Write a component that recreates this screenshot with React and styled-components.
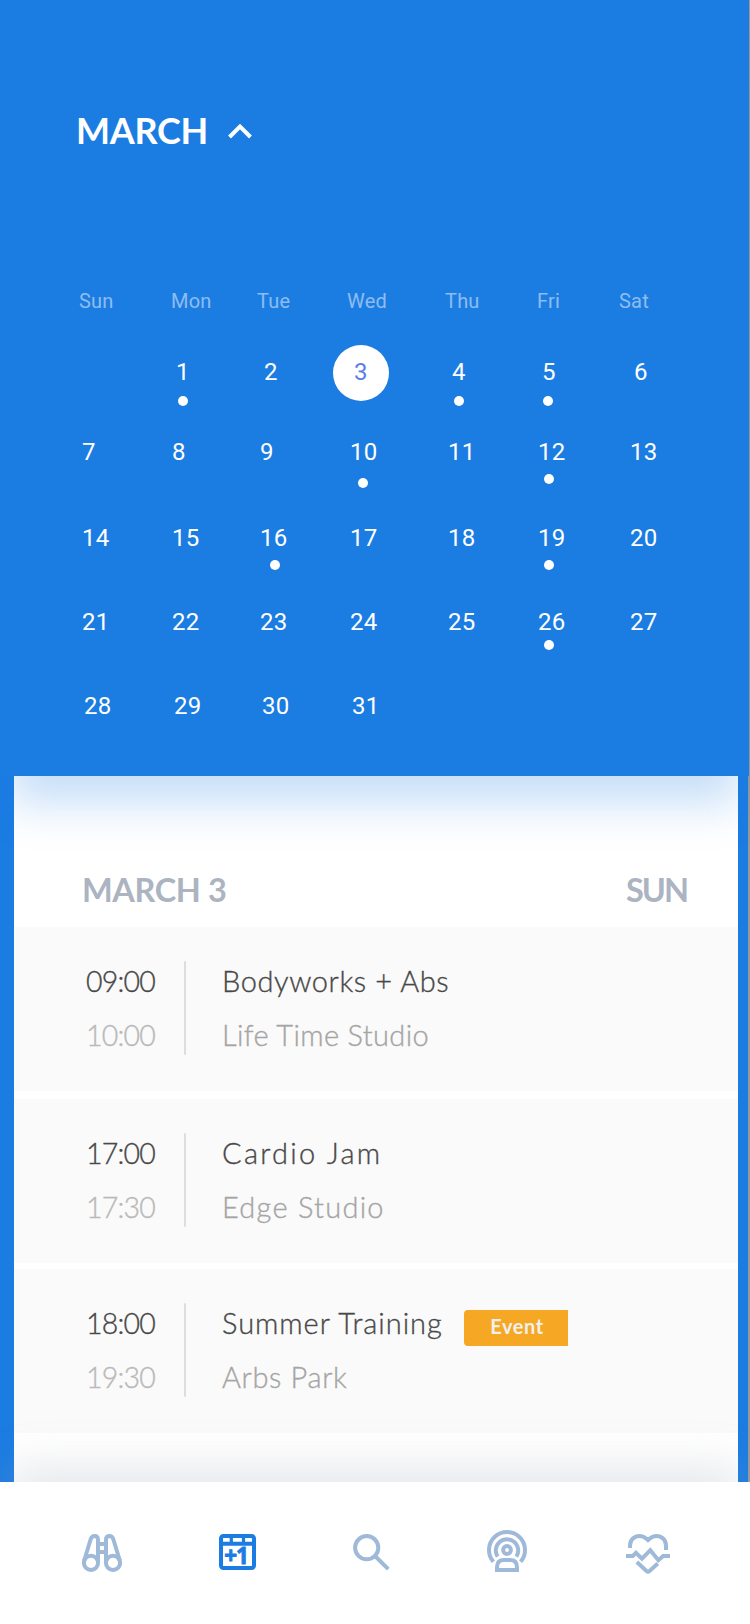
import React from "react";
import styled, { createGlobalStyle } from "styled-components";

const BLUE = "#1b7ce2";
const MUTED = "#9fb9d9";

const GlobalStyle = createGlobalStyle`
  * { box-sizing: border-box; }
  body { margin: 0; background: #999; }
`;

const Screen = styled.div`
  width: 750px;
  height: 1624px;
  display: flex;
  flex-direction: column;
  overflow: hidden;
  background: #999;
  font-family: Lato, "Liberation Sans", sans-serif;
  white-space: nowrap;
`;

const Calendar = styled.section`
  position: relative;
  z-index: 1;
  flex: none;
  width: 749px;
  height: 776px;
  padding-top: 108px;
  background: ${BLUE};
  box-shadow: 0 36px 42px -9px rgba(27, 124, 226, 0.25);
`;

const MonthTitle = styled.header`
  display: flex;
  align-items: center;
  gap: 21px;
  height: 46px;
  padding-left: 76px;
  color: #fff;
`;

const Month = styled.h1`
  margin: 0 0 2px;
  width: 131px;
  font-size: 36px;
  line-height: 44px;
  font-weight: 700;
  letter-spacing: ${(p) => p.$spacing}px;
`;

const Weekdays = styled.div`
  display: grid;
  grid-template-columns: 92px 86px 90px 98px 92px 82px auto;
  margin-top: 135px;
  padding-left: 79px;
  color: rgba(255, 255, 255, 0.5);
  font: 400 20px/24px Roboto, sans-serif;
  letter-spacing: 0.2px;
`;

const Weeks = styled.div`
  display: grid;
  grid-template-rows: 80px 86px 84px 84px 28px;
  margin-top: 45px;
  padding-left: 82px;
`;

const Week = styled.div`
  display: grid;
  grid-template-columns: 90px 88px 90px 98px 90px 92px auto;
  padding-left: ${(p) => p.$shift}px;
`;

const Day = styled.div`
  position: relative;
  color: ${(p) => (p.$selected ? "#5b7fe8" : "#fff")};
  font: 400 24px/28px Roboto, sans-serif;
  letter-spacing: 0.2px;
`;

const DayNumber = styled.span`
  position: relative;
`;

const SelectedDisc = styled.i`
  position: absolute;
  left: -21px;
  top: -13px;
  width: 56px;
  height: 56px;
  border-radius: 50%;
  background: #fff;
`;

const EventDot = styled.i`
  position: absolute;
  left: ${(p) => p.$x}px;
  top: ${(p) => p.$y}px;
  width: 10px;
  height: 10px;
  border-radius: 50%;
  background: #fff;
`;

const Backdrop = styled.main`
  flex: none;
  width: 748px;
  height: 706px;
  padding: 0 10px 0 14px;
  background: ${BLUE};
`;

const Agenda = styled.div`
  height: 706px;
  background: #fff;
`;

const AgendaHead = styled.div`
  display: flex;
  justify-content: space-between;
  align-items: flex-end;
  height: 151px;
  padding: 0 49px 17px 68px;
  color: #abb4c0;
`;

const AgendaLabel = styled.h2`
  margin: 0 ${(p) => -p.$spacing}px 0 0;
  font-size: 32.5px;
  line-height: 40px;
  font-weight: 700;
  letter-spacing: ${(p) => p.$spacing}px;
`;

const Entry = styled.article`
  display: grid;
  grid-template-columns: 142px 2px 1fr;
  height: 164px;
  margin-bottom: ${(p) => p.$gap}px;
  padding: 34px 0 36px 28px;
  background: #fafafa;
`;

const Times = styled.div`
  padding-right: 29px;
  text-align: right;
`;

const Divider = styled.div`
  background: #ddd;
  border-radius: 1px;
`;

const Details = styled.div`
  padding-left: 36px;
`;

const Line = styled.div`
  display: flex;
  align-items: center;
  justify-content: ${(p) => (p.$end ? "flex-end" : "flex-start")};
  height: 34px;
  margin: ${(p) => (p.$secondary ? "20px" : "3px")} 0 0;
  color: ${(p) => p.$color};
  font-size: ${(p) => (p.$end ? 28.5 : 29)}px;
  line-height: 34px;
  font-weight: 300;
  letter-spacing: ${(p) => p.$spacing}px;
  -webkit-text-stroke: 0.35px currentColor;
`;

const Name = styled.span`
  width: ${(p) => (p.$fixed ? `${p.$fixed}px` : "auto")};
`;

const Badge = styled.span`
  width: 104px;
  height: 36px;
  margin-top: 10px;
  padding-left: 2px;
  border-radius: 4px 0 0 4px;
  background: #f6a724;
  color: #f1f0ec;
  font-size: 20px;
  line-height: 33px;
  font-weight: 700;
  letter-spacing: 0.6px;
  text-align: center;
  -webkit-text-stroke: 0;
`;

const TabBar = styled.nav`
  position: relative;
  z-index: 2;
  flex: none;
  display: flex;
  justify-content: space-between;
  align-items: flex-start;
  height: 142px;
  padding: 48px 80px 0 82px;
  background: #fff;
  box-shadow: 0 -26px 44px -10px rgba(158, 165, 182, 0.26);
`;

const TabIcon = styled.svg`
  display: block;
  margin-top: ${(p) => p.$top}px;
  margin-left: ${(p) => p.$nudge || 0}px;
  margin-right: ${(p) => -(p.$nudge || 0)}px;
  fill: none;
  stroke: ${(p) => (p.$active ? BLUE : MUTED)};
  stroke-width: 4;
`;

const IconText = styled.text`
  fill: ${BLUE};
  stroke: ${BLUE};
  stroke-width: 0.8;
  font: 700 22.5px "Open Sans", sans-serif;
  letter-spacing: -1px;
`;

const weekdays = ["Sun", "Mon", "Tue", "Wed", "Thu", "Fri", "Sat"];

const weeks = [
  { shift: 4, days: [null, 1, 2, 3, 4, 5, 6] },
  { shift: 0, days: [7, 8, 9, 10, 11, 12, 13] },
  { shift: 0, days: [14, 15, 16, 17, 18, 19, 20] },
  { shift: 0, days: [21, 22, 23, 24, 25, 26, 27] },
  { shift: 2, days: [28, 29, 30, 31] },
];

const dots = {
  1: [2, 38],
  4: [2, 38],
  5: [1, 38],
  10: [8, 40],
  12: [6, 36],
  16: [10, 36],
  19: [6, 36],
  26: [6, 32],
};

const entries = [
  { start: "09:00", end: "10:00", name: "Bodyworks + Abs", place: "Life Time Studio", gap: 8, ns: 0.6, ps: 0.35 },
  { start: "17:00", end: "17:30", name: "Cardio Jam", place: "Edge Studio", gap: 6, ns: 2.3, ps: 1.25 },
  { start: "18:00", end: "19:30", name: "Summer Training", place: "Arbs Park", gap: 0, ns: 0.95, ps: 0.65, tag: "Event" },
];

function Icons() {
  return (
    <TabBar>
      <TabIcon $top={4} width="40" height="38" viewBox="0 0 40 38">
        <circle cx="9" cy="28.8" r="7.1" />
        <circle cx="31" cy="28.8" r="7.1" />
        <path d="M2.2 26.5L8.6 5.5Q9.6 2 12.6 2Q16 2 16 5.6V28.5M37.8 26.5L31.4 5.5Q30.4 2 27.4 2Q24 2 24 5.6V28.5M16 10H24M16 18H24" />
      </TabIcon>
      <TabIcon $top={4} $active width="37" height="36" viewBox="0 0 37 36">
        <rect x="2" y="2" width="33" height="32" rx="2.4" />
        <path d="M2 9.8H35" />
        <path d="M12.3 2V10M24.5 2V10" strokeWidth="3.2" />
        <IconText x="5.2" y="29.8">+1</IconText>
      </TabIcon>
      <TabIcon $top={4} $nudge={-1} width="37" height="37" viewBox="0 0 37 37">
        <circle cx="13.7" cy="13.7" r="11.6" />
        <path d="M22.5 22.5L35.3 35.2" />
      </TabIcon>
      <TabIcon $top={0} $nudge={-1} width="41" height="42" viewBox="0 0 41 42">
        <path d="M6.4 31.8A18 18 0 1 1 33.6 31.8" />
        <path d="M10.6 26.6A11.2 11.2 0 1 1 29.4 26.6" />
        <circle cx="20" cy="20" r="3.9" />
        <path d="M10 40V37.4Q10 30 17 30H23Q30 30 30 37.4V40Z" />
      </TabIcon>
      <TabIcon $top={4} width="44" height="40" viewBox="0 0 44 40">
        <path d="M4 14V11.5C4 5.5 8.5 2 13.5 2C17.5 2 19.5 3.8 22 6C24.5 3.8 26.5 2 30.5 2C35.5 2 40 5.5 40 11.5V16" />
        <path d="M0 22H6.8L10 18.8L16 24.6L24.3 16.2L32.4 26.2L37.2 22H44" />
        <path d="M10.8 28L20.5 37Q22 38.3 23.5 37L31.8 29.6" />
      </TabIcon>
    </TabBar>
  );
}

export default function App() {
  return (
    <Screen>
      <GlobalStyle />
      <Calendar>
        <MonthTitle>
          <Month $spacing={-0.3}>MARCH</Month>
          <svg width="24" height="16" viewBox="0 0 24 16" fill="none" stroke="#fff" strokeWidth="4">
            <path d="M1.5 14L12 3.5L22.5 14" />
          </svg>
        </MonthTitle>
        <Weekdays>
          {weekdays.map((d) => (
            <span key={d}>{d}</span>
          ))}
        </Weekdays>
        <Weeks>
          {weeks.map((week) => (
            <Week key={week.shift + "-" + week.days[1]} $shift={week.shift}>
              {week.days.map((day, i) => (
                <Day key={i} $selected={day === 3}>
                  {day === 3 && <SelectedDisc />}
                  {day && <DayNumber>{day}</DayNumber>}
                  {dots[day] && <EventDot $x={dots[day][0]} $y={dots[day][1]} />}
                </Day>
              ))}
            </Week>
          ))}
        </Weeks>
      </Calendar>
      <Backdrop>
        <Agenda>
          <AgendaHead>
            <AgendaLabel $spacing={-0.4}>MARCH 3</AgendaLabel>
            <AgendaLabel $spacing={-2}>SUN</AgendaLabel>
          </AgendaHead>
          {entries.map((e) => (
            <Entry key={e.start} $gap={e.gap}>
              <Times>
                <Line $end $color="#484848" $spacing={-0.8}>{e.start}</Line>
                <Line $end $secondary $color="#b9b9b9" $spacing={-0.8}>{e.end}</Line>
              </Times>
              <Divider />
              <Details>
                <Line $color="#484848" $spacing={e.ns}>
                  <Name $fixed={e.tag && 242}>{e.name}</Name>
                  {e.tag && <Badge>{e.tag}</Badge>}
                </Line>
                <Line $secondary $color="#a5a5a5" $spacing={e.ps}>
                  <Name>{e.place}</Name>
                </Line>
              </Details>
            </Entry>
          ))}
        </Agenda>
      </Backdrop>
      <Icons />
    </Screen>
  );
}
